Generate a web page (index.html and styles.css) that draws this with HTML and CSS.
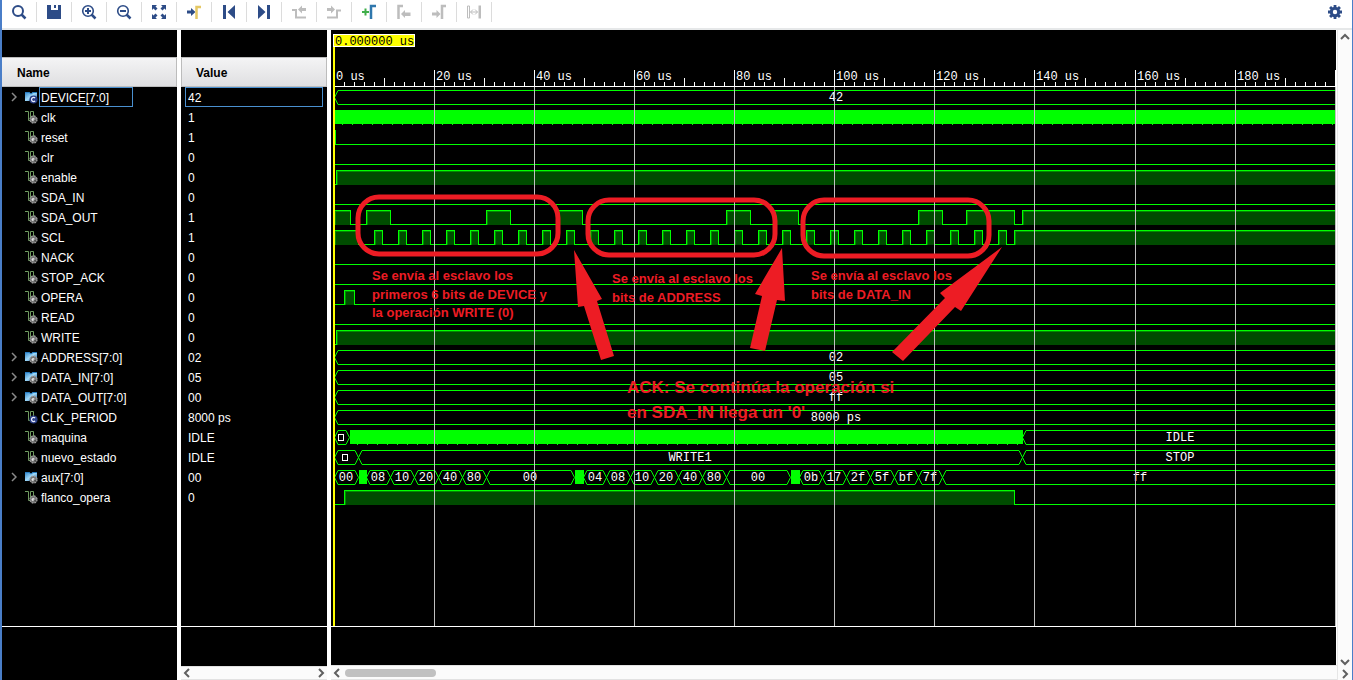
FILE: index.html
```html
<!DOCTYPE html>
<html lang="es">
<head>
<meta charset="utf-8">
<title>Waveform viewer</title>
<link rel="stylesheet" href="styles.css">
</head>
<body>
<svg class="defs" width="0" height="0" aria-hidden="true">
  <defs>
    <linearGradient id="busFill" x1="0" y1="0" x2="1" y2="1">
      <stop offset="0" stop-color="#2b7fc4"/><stop offset=".5" stop-color="#9fd8f8"/><stop offset="1" stop-color="#1c63a8"/>
    </linearGradient>
    <symbol id="knob" viewBox="0 0 8 8">
      <circle cx="4" cy="4" r="3.2" fill="#777" stroke="#a0a0a0" stroke-dasharray="1.6 .9"/>
      <circle cx="3.7" cy="4" r="1.4" fill="#e4e4e4"/><path d="M4 4.500h1.500V6" stroke="#333" stroke-width=".8" fill="none"/>
    </symbol>
    <symbol id="constant" viewBox="0 0 8 8">
      <circle cx="4" cy="4" r="3.600" fill="#2b3f86"/><path d="M5.4 2.8A1.8 1.8 0 1 0 5.4 5.2" stroke="#e8ecff" stroke-width="1.1" fill="none"/>
    </symbol>
    <symbol id="signal" viewBox="0 0 14 14"><path d="M0 1.500h3.500v9h2M5.500 10.500v-9h3v5" stroke="#6f9a60" fill="none"/></symbol>
    <symbol id="bus" viewBox="0 0 14 14"><path d="M0 2h4l2 1.500L8 2h4v9H7L5.500 10 4 11H0z" fill="url(#busFill)"/><path d="M0 2.500h4l2 1.500 2-1.500h4" stroke="#247ac0" fill="none"/></symbol>
  </defs>
</svg>
<div class="viewer">
  <div class="toolbar" role="toolbar" aria-label="Waveform">
    <button class="tool" aria-label="Find"><svg viewBox="0 0 16 16"><circle cx="7" cy="7" r="5" fill="none" stroke="#2d4c87" stroke-width="2"/><path d="M10.500 10.500l4 4" stroke="#2d4c87" stroke-width="2.500"/></svg></button>
    <button class="tool" aria-label="Save"><svg viewBox="0 0 16 16"><path d="M1 1h4v5h7V1h3v14H1z" fill="#2d4c87"/><path d="M8 1h2v3H8z" fill="#2d4c87"/></svg></button>
    <button class="tool" aria-label="Zoom in"><svg viewBox="0 0 16 16"><circle cx="7" cy="7" r="5.300" fill="none" stroke="#2d4c87" stroke-width="1.600"/><path d="M4 7h6M7 4v6" stroke="#2d4c87" stroke-width="2"/><path d="M10.500 10.500l4 4" stroke="#2d4c87" stroke-width="2.500"/></svg></button>
    <button class="tool" aria-label="Zoom out"><svg viewBox="0 0 16 16"><circle cx="7" cy="7" r="5.300" fill="none" stroke="#2d4c87" stroke-width="1.600"/><path d="M4 7h6" stroke="#2d4c87" stroke-width="2"/><path d="M10.500 10.500l4 4" stroke="#2d4c87" stroke-width="2.500"/></svg></button>
    <button class="tool" aria-label="Zoom fit"><svg viewBox="0 0 16 16"><path d="M1 1h5L4.500 2.500l2 2-2 2-2-2L1 6zM15 1v5l-1.500-1.500-2 2-2-2 2-2L10 1zM1 15v-5l1.500 1.500 2-2 2 2-2 2L6 15zM15 15h-5l1.500-1.500-2-2 2-2 2 2L15 10z" fill="#2d4c87"/></svg></button>
    <button class="tool" aria-label="Go to cursor"><svg viewBox="0 0 16 16"><path d="M1 6.500h4V4l4.500 4L5 12V9.500H1z" fill="#2d4c87"/><path d="M10.500 15V3H15" fill="none" stroke="#e5c865" stroke-width="2.500"/></svg></button>
    <button class="tool" aria-label="Go to start"><svg viewBox="0 0 16 16"><path d="M2 1h3v14H2zM14 1v14L6.500 8z" fill="#2d4c87"/></svg></button>
    <button class="tool" aria-label="Go to end"><svg viewBox="0 0 16 16"><path d="M11 1h3v14h-3zM2 1v14l7.500-7z" fill="#2d4c87"/></svg></button>
    <button class="tool" aria-label="Previous transition" disabled><svg viewBox="0 0 16 16"><path d="M1 6h4v7.500h10" fill="none" stroke="#bdbdbd" stroke-width="2"/><path d="M7 5.500L11 1.500v2.500h4v3h-4v2.500z" fill="#bdbdbd"/></svg></button>
    <button class="tool" aria-label="Next transition" disabled><svg viewBox="0 0 16 16"><path d="M15 6.500h-4v7H1" fill="none" stroke="#bdbdbd" stroke-width="2"/><path d="M9 5.500L5 1.500v2.500H1v3h4v2.500z" fill="#bdbdbd"/></svg></button>
    <button class="tool" aria-label="Add marker"><svg viewBox="0 0 16 16"><path d="M1 8h7M4.500 4.500v7" stroke="#3fae49" stroke-width="2"/><path d="M10 15V2h5" fill="none" stroke="#2f77ad" stroke-width="2.500"/></svg></button>
    <button class="tool" aria-label="Previous marker" disabled><svg viewBox="0 0 16 16"><path d="M2.500 15V2H7" fill="none" stroke="#bdbdbd" stroke-width="2.500"/><path d="M5 10l4-4v2.500h5.500v3.500H9v2z" fill="#bdbdbd"/></svg></button>
    <button class="tool" aria-label="Next marker" disabled><svg viewBox="0 0 16 16"><path d="M11 15V2h4" fill="none" stroke="#bdbdbd" stroke-width="2.500"/><path d="M9.500 10l-4-4v2.500H1v3h4.500V14z" fill="#bdbdbd"/></svg></button>
    <button class="tool" aria-label="Swap cursors" disabled><svg viewBox="0 0 16 16"><path d="M1.500 2h2v12h-2z" fill="none" stroke="#bdbdbd"/><path d="M12.500 1.500H15v13h-2.500z" fill="#bdbdbd"/><path d="M4.500 8h7M7 5.500L4.500 8 7 10.500M9 5.500L11.500 8 9 10.500" fill="none" stroke="#bdbdbd"/></svg></button>
    <button class="tool settings" aria-label="Settings"><svg viewBox="0 0 16 16"><circle cx="8" cy="8" r="3.700" fill="none" stroke="#2d4c87" stroke-width="3"/><path d="M8 1v3M8 12v3M1 8h3M12 8h3M3.050 3.050l2 2M10.950 10.950l2 2M3.050 12.950l2-2M10.950 5.050l2-2" stroke="#2d4c87" stroke-width="2.800"/></svg></button>
  </div>
  <main class="panes">
    <section class="pane">
      <h2 class="heading">Name</h2>
      <ul class="rows" id="names"></ul>
    </section>
    <section class="pane">
      <h2 class="heading heading-value">Value</h2>
      <ul class="rows" id="values"></ul>
      <div class="hscroll">
        <button class="arrow" aria-label="Scroll values left"><svg viewBox="0 0 8 10"><path d="M6 1L2 5l4 4"/></svg></button>
        <button class="arrow" aria-label="Scroll values right"><svg viewBox="0 0 8 10"><path d="M2 1l4 4-4 4"/></svg></button>
      </div>
    </section>
    <section class="pane wave-pane">
      <div class="wave-area">
        <svg class="waves" id="waves" role="img" aria-label="Signal waveforms">
          <g id="plot"></g>
          <g class="ring">
            <rect x="27" y="167" width="200" height="57" rx="21"/>
            <rect x="257" y="170" width="187" height="55" rx="21"/>
            <rect x="472" y="170" width="186" height="56" rx="21"/>
          </g>
          <g class="pointer">
            <path d="M243 220L271 269 266 271 283 326 270 330 253 276 247 277z"/>
            <path d="M451 218L454 271 446 270 434 321 419 318 431 266 424 264z"/>
            <path d="M671 217L630 281 624 277 572 331 561 322 614 268 609 263z"/>
          </g>
          <g class="note">
            <text x="41" y="250">Se envía al esclavo los</text>
            <text x="41" y="269">primeros 6 bits de DEVICE y</text>
            <text x="41" y="287">la operación WRITE (0)</text>
            <text x="281" y="253">Se envía al esclavo los</text>
            <text x="281" y="272">bits de ADDRESS</text>
            <text x="480" y="250">Se envía al esclavo los</text>
            <text x="480" y="269">bits de DATA_IN</text>
          </g>
          <g class="note note-large">
            <text x="296" y="363">ACK: Se continúa la operación si</text>
            <text x="296" y="388">en SDA_IN llega un '0'</text>
          </g>
        </svg>
      </div>
      <div class="hscroll">
        <button class="arrow" aria-label="Scroll left"><svg viewBox="0 0 8 10"><path d="M6 1L2 5l4 4"/></svg></button>
        <div class="thumb"></div>
      </div>
    </section>
    <div class="vscroll">
      <button class="arrow" aria-label="Scroll up"><svg viewBox="0 0 10 8"><path d="M1 6l4-4 4 4"/></svg></button>
      <button class="arrow arrow-down" aria-label="Scroll down"><svg viewBox="0 0 10 8"><path d="M1 2l4 4 4-4"/></svg></button>
      <button class="arrow arrow-corner" aria-label="Scroll right"><svg viewBox="0 0 8 10"><path d="M2 1l4 4-4 4"/></svg></button>
    </div>
  </main>
</div>
<script src="waves.js"></script>
</body>
</html>
```
FILE: styles.css
```css
* { box-sizing: border-box; }
body {
  margin: 0;
  font: 12px/20px "Liberation Sans", Arial, sans-serif;
  background: #fff;
}
.defs { position: absolute; }
.viewer {
  display: flex;
  flex-direction: column;
  height: 100vh;
  border-left: 2px solid #4a7ec8;
  border-right: 1px solid #4a7ec8;
}
button {
  padding: 0;
  border: 0;
  background: none;
}
.toolbar {
  display: flex;
  flex: none;
  height: 30px;
  padding-top: 2px;
  border-bottom: 2px solid #e6e8e9;
}
.tool {
  display: flex;
  align-items: center;
  justify-content: center;
  width: 35px;
  height: 20px;
  border-right: 1px solid #dcdcdc;
}
.tool svg { width: 16px; height: 16px; }
.settings { margin-left: auto; border-right: 0; }
.panes {
  display: grid;
  grid-template-columns: 175px 146px minmax(0, 1fr) 15px;
  flex: 1;
  min-height: 0;
  column-gap: 4px;
}
.pane {
  display: flex;
  flex-direction: column;
  min-height: 0;
  padding-top: 27px;
  background: #000;
  color: #fff;
}
.heading {
  flex: none;
  height: 30px;
  margin: 0;
  padding-left: 15px;
  border: 1px solid #bcbcbc;
  border-left: 0;
  background: linear-gradient(#f4f4f5, #dfdfe1);
  color: #000;
  font-size: 12px;
  line-height: 30px;
}
.heading-value { padding-left: 14px; border-left: 1px solid #bcbcbc; }
.rows {
  flex: 1;
  min-height: 0;
  margin: 0 0 53px;
  padding: 0;
  border-bottom: 1px solid #fff;
  list-style: none;
  overflow: hidden;
}
.heading-value + .rows { margin-bottom: 39px; }
.row {
  display: grid;
  grid-template-columns: 23px 14px 94px;
  height: 20px;
}
.expand { grid-column: 1; padding-left: 1px; }
.expand svg, .arrow svg { display: block; margin: auto; fill: none; stroke: #8a8a8a; stroke-width: 1.5; }
.expand svg { width: 6px; height: 10px; }
.kind { grid-column: 2; width: 14px; height: 14px; margin-top: 4px; }
.label { grid-column: 3; }
.label, .value {
  height: 20px;
  padding: 0 1px;
  border: 1px solid transparent;
  line-height: 20px;
}
.value { margin: 0 4px; padding: 0 2px; }
.value.selected, .label.selected { border-color: #4a90d0; }

.hscroll {
  display: flex;
  flex: none;
  align-items: center;
  justify-content: space-between;
  height: 14px;
  border-top: 1px solid #e2e2e2;
  border-bottom: 1px solid #e2e2e2;
  background: #fbfbfb;
}
.arrow { width: 12px; height: 12px; }
.arrow svg { width: 8px; height: 10px; stroke: #606060; stroke-width: 2; }
.wave-pane { margin-right: -3px; padding-top: 0; }
.wave-area {
  flex: 1;
  min-height: 0;
  margin-bottom: 38px;
  border-bottom: 1px solid #fff;
}
.wave-pane .hscroll { height: 15px; justify-content: flex-start; margin-right: -1px; }
.thumb { width: 91px; height: 8px; margin-left: 2px; border-radius: 4px; background: #c1c1c1; }
.vscroll {
  display: flex;
  flex-direction: column;
  align-items: center;
  padding-top: 1px;
  border-left: 1px solid #e6e6e6;
  background: #fbfbfb;
}
.vscroll .arrow svg { width: 10px; height: 8px; }
.arrow-down { margin-top: auto; }
.vscroll .arrow-corner svg { width: 8px; height: 10px; }

.waves { display: block; width: 100%; height: 100%; overflow: hidden; }
.trace { fill: none; stroke: #0f0; shape-rendering: crispEdges; }
.slant { fill: none; stroke: #0f0; }
.high { fill: #004b00; shape-rendering: crispEdges; }
.edge { fill: #008a00; shape-rendering: crispEdges; }
.busy { fill: #0f0; shape-rendering: crispEdges; }
.tick { stroke: #fff; shape-rendering: crispEdges; }
.gridline { stroke: #c0c0c0; shape-rendering: crispEdges; }
.cursor { stroke: #ff0; stroke-width: 2; shape-rendering: crispEdges; }
.cursor-box { fill: #ff0; stroke: #fff; }
.reading { fill: #fff; font: 12px "Liberation Mono", "Courier New", monospace; }
.reading.centred { text-anchor: middle; }
.reading.dark { fill: #000; }
.unfit { fill: none; stroke: #fff; shape-rendering: crispEdges; }
.ring { fill: none; stroke: #ed1c24; stroke-width: 5; }
.pointer { fill: #ed1c24; }
.note { fill: #ed1c24; font: bold 13px "Liberation Sans", Arial, sans-serif; }
.note-large { font-size: 17px; }
```
FILE: waves.js
```js
const ORIGIN = 3;
const SCALE = 5.007;
const LABEL_WIDTH = 46;
const canvas = document.getElementById('waves');
let end = 0;
const x = t => t === Infinity ? end + 10 : Math.floor(ORIGIN + t * SCALE);

// Level signals list [time, level]; bus signals list [time, text].
// BUSY marks values that change faster than a pixel, SMALL a value too narrow to print.
const BUSY = Symbol('busy');
const SMALL = Symbol('small');

const scl = [[0, 1], [4.8, 0]];
for (let i = 0; i < 27; i++) scl.push([8 + 4.8 * i, 1], [9.6 + 4.8 * i, 0]);
scl.push([136, 1]);

const aux = [[0, '00'], [4.8, BUSY], [6.4, '08'], [11.2, '10'], [16, '20'], [20.8, '40'], [25.6, '80'],
  [30.4, '00'], [48, BUSY], [49.8, '04'], [54.4, '08'], [59.2, '10'], [64, '20'], [68.8, '40'], [73.6, '80'],
  [78.4, '00'], [91.2, BUSY], [93, '0b'], [97.6, '17'], [102.4, '2f'], [107.2, '5f'], [112, 'bf'], [116.8, '7f'],
  [121.6, 'ff']];

const signals = [
  { name: 'DEVICE[7:0]', value: '42', bus: [[0, '42']], expand: true, constant: true, selected: true },
  { name: 'clk', value: '1', bus: [[0, BUSY]] },
  { name: 'reset', value: '1', level: [[0, 1], [0.2, 0]] },
  { name: 'clr', value: '0', level: [[0, 0]] },
  { name: 'enable', value: '0', level: [[0, 0], [0.5, 1]] },
  { name: 'SDA_IN', value: '0', level: [[0, 0]] },
  { name: 'SDA_OUT', value: '1', level: [[0, 1], [3.2, 0], [6.4, 1], [11.2, 0], [30.4, 1], [35.2, 0], [44.8, 1],
    [49.6, 0], [78.4, 1], [83.2, 0], [88, 1], [92.8, 0], [116.8, 1], [121.6, 0], [126.4, 1], [136, 0], [137.6, 1]] },
  { name: 'SCL', value: '1', level: scl },
  { name: 'NACK', value: '0', level: [[0, 0]] },
  { name: 'STOP_ACK', value: '0', level: [[0, 0]] },
  { name: 'OPERA', value: '0', level: [[0, 0], [2, 1], [4, 0]] },
  { name: 'READ', value: '0', level: [[0, 0]] },
  { name: 'WRITE', value: '0', level: [[0, 0], [0.5, 1]] },
  { name: 'ADDRESS[7:0]', value: '02', bus: [[0, '02']], expand: true },
  { name: 'DATA_IN[7:0]', value: '05', bus: [[0, '05']], expand: true },
  { name: 'DATA_OUT[7:0]', value: '00', bus: [[0, 'ff']], expand: true },
  { name: 'CLK_PERIOD', value: '8000 ps', bus: [[0, '8000 ps']], constant: true },
  { name: 'maquina', value: 'IDLE', bus: [[0, SMALL], [3.1, BUSY], [137.6, 'IDLE']] },
  { name: 'nuevo_estado', value: 'IDLE', bus: [[0, SMALL], [4.8, 'WRITE1'], [137.6, 'STOP']] },
  { name: 'aux[7:0]', value: '00', bus: aux, expand: true },
  { name: 'flanco_opera', value: '0', level: [[0, 0], [2, 1], [136, 0]] }
];

let under = [];
let over = [];
const path = (cls, d) => under.push(`<path class="${cls}" d="${d}"/>`);
const rect = (cls, left, top, w, h) => under.push(`<rect class="${cls}" x="${left}" y="${top}" width="${w}" height="${h}"/>`);
const text = (cls, left, base, s) => `<text class="reading ${cls}" x="${left}" y="${base}">${s}</text>`;

function drawLevel(edges, mid) {
  let d = '';
  edges.forEach(([t, level], i) => {
    const a = x(t), b = Math.max(a, x(edges[i + 1] ? edges[i + 1][0] : Infinity));
    const y = mid + (level ? -7 : 7) + 0.5;
    if (level) {
      rect('high', a, mid - 6, b - a, 14);
      rect('edge', a, mid - 6, b - a, 1);
      rect('edge', a + 1, mid - 6, 1, 14);
    }
    d += `${i ? 'L' : 'M'}${a + 0.5} ${y}L${b + 0.5} ${y}`;
  });
  path('trace', d);
}

function drawBus(cells, mid) {
  const top = mid - 6.5, bottom = mid + 7.5, centre = mid + 0.5;
  cells.forEach(([t, s], i) => {
    const last = !cells[i + 1];
    const a = x(t), b = Math.max(a + 8, x(last ? Infinity : cells[i + 1][0]));
    if (s === BUSY) {
      rect('busy', a + (i ? 1 : 0), mid - 7, b - a, 14);
      for (let p = a + 8; p < b && b - a > 20; p += 10) rect('busy', p, mid + 7, 1, 1);
      return;
    }
    path('trace', `M${a + 4} ${top}H${b - 3}M${a + 4} ${bottom}H${b - 3}`);
    path('slant', `M${a + 4} ${top}L${a + 0.5} ${centre}L${a + 4} ${bottom}`);
    if (!last) path('slant', `M${b - 3} ${top}L${b + 0.5} ${centre}L${b - 3} ${bottom}`);
    const c = Math.round((a + Math.min(b, x(200) + 2)) / 2);
    if (s === SMALL) rect('unfit', c - 3.5, mid - 2.5, 5, 6);
    else under.push(text('centred', c, mid + 4, s));
  });
}

function drawPlot() {
  end = canvas.clientWidth;
  under = [];
  over = [];
  signals.forEach((s, i) => (s.bus ? drawBus : drawLevel)(s.bus || s.level, 67 + 20 * i));
  for (let t = 0; x(t) < end; t += 2) {
    const p = x(t) + 0.5;
    if (t) over.push(`<path class="tick" d="M${p} ${t % 20 ? (t % 10 ? 52 : 48) : 40}V57"/>`);
    if (t % 20 === 0) {
      if (t) over.push(`<line class="gridline" x1="${p}" x2="${p}" y1="57" y2="100%"/>`);
      if (x(t) + LABEL_WIDTH < end) over.push(text('', x(t) + 2, 50, `${t} us`));
    }
  }
  over.push(`<path class="tick" d="M3 56.5H${end}"/>`,
    '<line class="cursor" x1="3" x2="3" y1="4" y2="100%"/>',
    '<rect class="cursor-box" x="2.5" y="4.5" width="81" height="12"/>',
    text('dark', 4, 15, '0.000000 us'));
  document.getElementById('plot').innerHTML = under.join('') + over.join('');
}

document.getElementById('names').innerHTML = signals.map(s => `<li class="row">
  ${s.expand ? `<button class="expand" aria-label="Expand ${s.name}"><svg viewBox="0 0 6 10"><path d="M1 1l4 4-4 4"/></svg></button>` : ''}
  <svg class="kind" viewBox="0 1 14 14"><use href="#${s.expand ? 'bus' : 'signal'}" width="14" height="14"/><use href="#${s.constant ? 'constant' : 'knob'}" x="4" y="5" width="9" height="9"/></svg>
  <span class="label${s.selected ? ' selected' : ''}">${s.name}</span></li>`).join('');
document.getElementById('values').innerHTML = signals.map(s =>
  `<li class="value${s.selected ? ' selected' : ''}">${s.value}</li>`).join('');

drawPlot();
window.addEventListener('resize', drawPlot);
```
